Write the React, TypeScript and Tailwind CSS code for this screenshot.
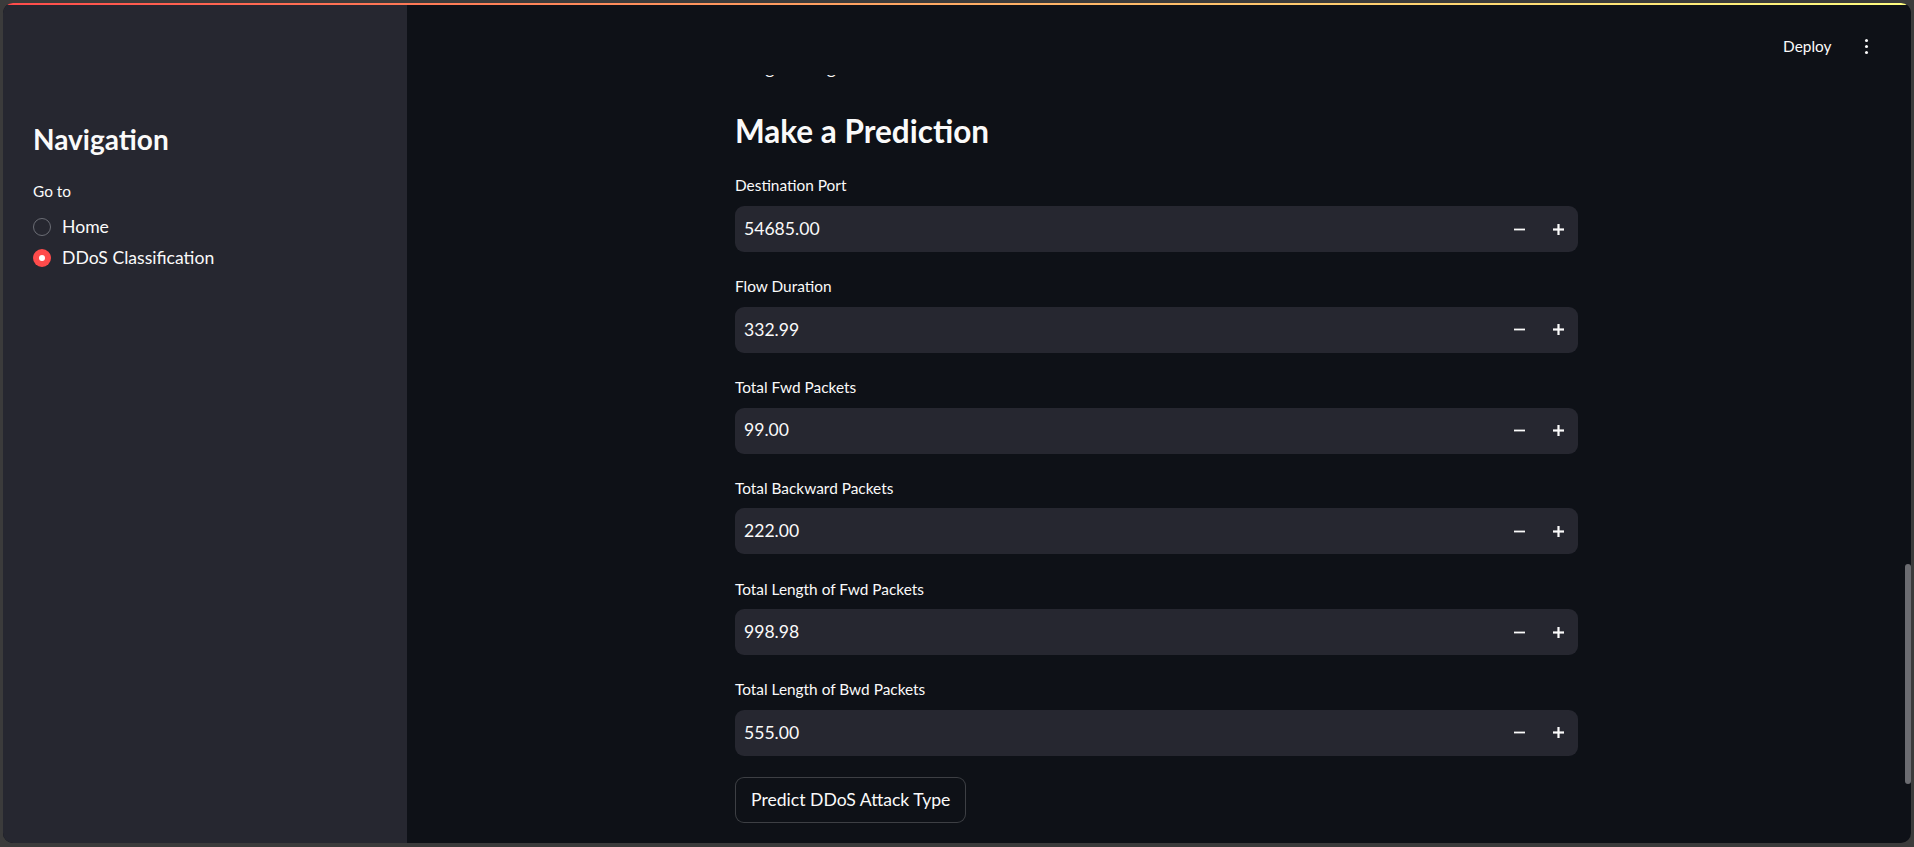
import { useState } from "react";

const fields = [
    { label: "Destination Port", value: "54685.00" },
    { label: "Flow Duration", value: "332.99" },
    { label: "Total Fwd Packets", value: "99.00" },
    { label: "Total Backward Packets", value: "222.00" },
    { label: "Total Length of Fwd Packets", value: "998.98" },
    { label: "Total Length of Bwd Packets", value: "555.00" },
];

function NumberField({ label, value }: { label: string; value: string }) {
    return <div className="flex flex-col">
        <div className="h-[28px] mb-[6px] flex items-center text-[15.4px] text-[#fafafa]">{label}</div>
        <div className="h-[46px] rounded-[9px] bg-[#262730] flex items-center">
            <div className="flex-1 pl-[9px] text-[17.6px] text-[#fafafa]">{value}</div>
            <button className="w-[39px] h-full flex items-center justify-center">
                <svg width="11" height="11" viewBox="0 0 11 11"><rect x="0" y="4.6" width="11" height="1.8" fill="#fafafa" /></svg>
            </button>
            <button className="w-[39px] h-full flex items-center justify-center">
                <svg width="11" height="11" viewBox="0 0 11 11"><rect x="0" y="4.4" width="11" height="2.2" fill="#fafafa" /><rect x="4.4" y="0" width="2.2" height="11" fill="#fafafa" /></svg>
            </button>
        </div>
    </div>
}

function Radio({ label, checked, onClick }: { label: string; checked: boolean; onClick: () => void }) {
    return <div className="h-[31px] flex items-center gap-[11px] cursor-pointer" onClick={onClick}>
        {checked
            ? <span className="w-[18px] h-[18px] rounded-full bg-[#ff4b4b] flex items-center justify-center"><span className="w-[6px] h-[6px] rounded-full bg-white" /></span>
            : <span className="w-[18px] h-[18px] rounded-full border-[1.5px] border-[#6b6d75]" />}
        <span className="text-[17.6px] text-[#fafafa]">{label}</span>
    </div>
}

export default function App() {
    const [page, setPage] = useState("ddos");

    return <div className="h-screen w-full bg-[#3b3b3b] pt-[3px] px-[3px] pb-[4px] font-['Lato',sans-serif]">
        <div className="relative h-full w-full rounded-[10px] overflow-hidden flex bg-[#0e1117]">
            <div className="absolute top-0 left-0 right-0 h-[2px] z-20 bg-gradient-to-r from-[#ff4b4b] to-[#fffd80]" />

            {/* sidebar */}
            <div className="w-[404px] shrink-0 bg-[#262730] pl-[30px] pt-[119px]">
                <h2 className="text-[28px] leading-[34px] font-bold text-[#fafafa]">Navigation</h2>
                <div className="mt-[26px] h-[20px] flex items-center text-[15.4px] text-[#fafafa]">Go to</div>
                <div className="mt-[9.5px] flex flex-col">
                    <Radio label="Home" checked={page === "home"} onClick={() => setPage("home")} />
                    <Radio label="DDoS Classification" checked={page === "ddos"} onClick={() => setPage("ddos")} />
                </div>
            </div>

            {/* main */}
            <div className="relative flex-1 overflow-hidden">
                <div className="absolute top-0 left-0 right-0 h-[72px] z-10 bg-[#0e1117] flex items-start justify-end pt-[34px]">
                    <span className="text-[15.4px] leading-[18px] text-[#fafafa] mr-[33px]">Deploy</span>
                    <div className="mr-[43px] mt-[1.5px] flex flex-col gap-[2.5px]">
                        <span className="w-[3.5px] h-[3.5px] rounded-full bg-[#fafafa]" />
                        <span className="w-[3.5px] h-[3.5px] rounded-full bg-[#fafafa]" />
                        <span className="w-[3.5px] h-[3.5px] rounded-full bg-[#fafafa]" />
                    </div>
                </div>

                <div className="pr-[5px] pt-[51px]">
                    <div className="w-[843px] mx-auto flex flex-col text-[#fafafa]">
                        <p className="text-[17.6px] leading-[28px] -ml-[4px]">Using this Algorithm</p>
                        <h2 className="mt-[29px] text-[31.5px] leading-[40px] font-bold">Make a Prediction</h2>
                        <div className="mt-[21px] flex flex-col gap-[20.8px]">
                            {fields.map(f => <NumberField key={f.label} label={f.label} value={f.value} />)}
                        </div>
                        <div className="mt-[21px]">
                            <button className="h-[46px] px-[15px] rounded-[9px] border border-[#fafafa33] bg-[#0e1117] text-[17.6px] text-[#fafafa]">Predict DDoS Attack Type</button>
                        </div>
                    </div>
                </div>

                <div className="absolute right-0 top-[561px] w-[6px] h-[220px] rounded-full bg-[#6b6c71]" />
            </div>
        </div>
    </div>
}
